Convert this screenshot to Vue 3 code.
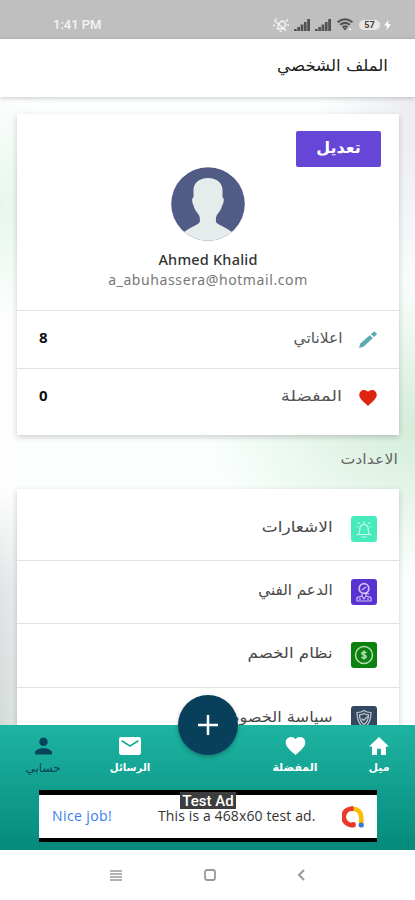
<script setup>
// stretch: horizontal scale that gives each label the wide letterforms of the design
const stats = [
  { label: 'اعلاناتي', value: 8, icon: 'pencil', stretch: 1.03 },
  { label: 'المفضلة', value: 0, icon: 'heart', stretch: 1.2 },
]
const settings = [
  { label: 'الاشعارات', icon: 'bell', stretch: 1.13 },
  { label: 'الدعم الفني', icon: 'support', stretch: 1.01 },
  { label: 'نظام الخصم', icon: 'discount', stretch: 1.11 },
  { label: 'سياسة الخصوصية', icon: 'privacy', stretch: 1.08 },
]
</script>

<template>
  <div class="screen">
    <div class="status">
      <span class="time">1:41 PM</span>
      <div class="indicators">
        <svg class="mute" viewBox="0 0 18 16" width="17" height="16"><path d="M5 12c2-1 1-6 5-8 3-1 5 2 4 5l-2 3H5zM2 3l13 11M3 8l-2 1M5 3 4 1M15 4l2-2M16 8h2M8 14l2 1" fill="none" stroke="#f4f4f4" stroke-width="1.500"/></svg>
        <svg v-for="n in 2" :key="n" class="signal" viewBox="0 0 16 12" width="16" height="12"><path d="M0 12v-2h2.700v2zM3.300 12V8h2.700v4zM6.600 12V5.500h2.700V12zM9.900 12V3h2.700v9zM13.200 12V0H16v12z" fill="#555150"/></svg>
        <svg class="wifi" viewBox="0 0 18 14" width="18" height="13"><path d="M1 4.500c5-4 11-4 16 0M3.700 7.300c3.500-2.700 7-2.700 10.600 0M6.300 10c2-1.500 3.500-1.500 5.400 0" fill="none" stroke="#555150" stroke-width="2.200"/><path d="m6.500 10.500 2.500 3 2.500-3z" fill="#555150"/><circle cx="14.500" cy="12" r="1.300" fill="#eee"/></svg>
        <span class="battery">57</span>
        <svg class="bolt" viewBox="0 0 7 10" width="7" height="10"><path d="M4.500 0 0 5.500h3L2.500 10 7 4.300H4z" fill="#fff"/></svg>
      </div>
    </div>

    <header class="header"><h1>الملف الشخصي</h1></header>

    <main class="content">
      <section class="card profile">
        <div class="intro">
          <button class="edit"><span>تعديل</span></button>
          <svg class="avatar" viewBox="0 0 74 74" width="74" height="74">
            <defs><clipPath id="disc"><circle cx="37" cy="37" r="36.800"/></clipPath></defs>
            <g clip-path="url(#disc)">
              <rect width="74" height="74" fill="#505c85"/>
              <path d="M37 11c9 0 14.500 5 14.500 12v7.500c2 0 1.500 5-.3 8-1 4-3 6.500-5 9-1.500 2-1.500 6-1 8C48 58 55 60.500 61 65l-3 10H16l-3-10c6-4.500 13-7 15.500-9.500.8-2 .5-6-1-8-2-2.500-4-5-5-9-1.500-3-2-8 0-8V23C22.500 16 28 11 37 11z" fill="#e5ecec"/>
            </g>
          </svg>
          <div class="name">Ahmed Khalid</div>
          <div class="email">a_abuhassera@hotmail.com</div>
        </div>
        <div v-for="row in stats" :key="row.icon" class="stat">
          <svg v-if="row.icon === 'pencil'" viewBox="0 0 18 17" width="18" height="17"><path d="M0 17 1.300 12.600 10.700 4.200l3.300 2.900-9.500 8.600zM11.900 3.200l2.500-2.300c.5-.5 1.100-.5 1.600 0L17.500 2.300c.5.500.5 1 0 1.500L15.200 6z" fill="#5faab1"/></svg>
          <svg v-else viewBox="2 3 20 18.350" width="18" height="16"><path d="m12 21.350-1.450-1.320C5.400 15.360 2 12.280 2 8.500 2 5.420 4.420 3 7.500 3c1.740 0 3.410.81 4.500 2.090C13.090 3.810 14.760 3 16.500 3 19.580 3 22 5.420 22 8.500c0 3.780-3.400 6.860-8.550 11.540z" fill="#e02412"/></svg>
          <span class="label"><span class="word" :style="{ '--stretch': row.stretch }">{{ row.label }}</span></span>
          <b>{{ row.value }}</b>
        </div>
      </section>

      <h2><span class="word">الاعدادت</span></h2>

      <section class="card">
        <div v-for="row in settings" :key="row.icon" class="setting">
          <span class="tile" :class="row.icon">
            <svg v-if="row.icon === 'bell'" viewBox="0 0 26 26" width="26" height="26"><path d="M7.500 18.500c1.500-2 1-4 1.500-7 .5-2 2-3 4-3s3.500 1 4 3c.5 3 0 5 1.500 7zM10.500 21h5M13 8V5.500M8.500 8 7 6.500M17.500 8 19 6.500M5.500 10.500l1.500.5M20.500 10.500l-1.500.5M5.500 19l1.500-.5M20.500 19l-1.500-.5" /></svg>
            <svg v-else-if="row.icon === 'support'" viewBox="0 0 26 26" width="26" height="26"><circle cx="13" cy="9.500" r="4.800" stroke-width="1.800"/><path d="m11 11 4-3M11 15v2l-5 1.500V22h14v-3.500L15 17v-2M11 17l2 3 2-3M9 21v-2M17 21v-2M14 14l4 1"/></svg>
            <svg v-else-if="row.icon === 'discount'" viewBox="0 0 26 26" width="26" height="26"><circle cx="13" cy="13" r="8.500" stroke-width="1.500"/><path d="M15.300 11c-1-1.400-4.600-1.400-4.600.5s4.600 1.100 4.600 3.100-3.700 2-4.800.4M13 8.500v9" stroke-width="1.500"/></svg>
            <svg v-else viewBox="0 0 26 26" width="26" height="26"><path d="M13 4.500c2 1.500 4.500 2 7 2 0 7-1.500 12-7 15-5.500-3-7-8-7-15 2.500 0 5-.5 7-2zM13 7.500c1.500 1 3 1.300 4.500 1.300 0 5-1.200 7.700-4.500 9.700-3.300-2-4.500-4.700-4.500-9.700 1.500 0 3-.3 4.500-1.300zM10.500 12.500l2 2 4-4"/></svg>
          </span>
          <span class="label"><span class="word" :style="{ '--stretch': row.stretch }">{{ row.label }}</span></span>
        </div>
      </section>
    </main>

    <footer class="dock">
      <nav class="tabs">
        <a class="tab home">
          <svg viewBox="2 3 20 17" width="20" height="18" preserveAspectRatio="none"><path d="M10 20v-6h4v6h5v-8h3L12 3 2 12h3v8z" fill="#fff"/></svg>
          <span>ميل</span>
        </a>
        <a class="tab fav">
          <svg viewBox="2 3 20 18.350" width="21" height="19"><path d="m12 21.350-1.450-1.320C5.400 15.360 2 12.280 2 8.500 2 5.420 4.420 3 7.500 3c1.740 0 3.410.81 4.500 2.090C13.090 3.810 14.760 3 16.500 3 19.580 3 22 5.420 22 8.500c0 3.780-3.400 6.860-8.550 11.540z" fill="#fff"/></svg>
          <span>المفضلة</span>
        </a>
        <a class="tab mail">
          <svg viewBox="0 0 21 17" width="22" height="18"><rect width="21" height="17" rx="2" fill="#fff"/><path d="m2.500 3.500 8 5 8-5" fill="none" stroke="#1aaa98" stroke-width="1.500"/></svg>
          <span>الرسائل</span>
        </a>
        <a class="tab account">
          <svg viewBox="4 4 16 16" width="17" height="17"><path d="M12 12a4 4 0 1 0 0-8 4 4 0 0 0 0 8zm0 2c-2.670 0-8 1.340-8 4v2h16v-2c0-2.660-5.330-4-8-4z" fill="#08435c"/></svg>
          <span>حسابي</span>
        </a>
      </nav>
      <button class="fab"><svg viewBox="0 0 20 20" width="20" height="20"><path d="M10 0v20M0 10h20" stroke="#fff" stroke-width="2.500"/></svg></button>
      <div class="ad">
        <span class="job">Nice job!</span>
        <span class="message">This is a 468x60 test ad.</span>
        <svg class="logo" viewBox="0 0 22 22" width="22" height="22">
          <path d="M11 2.700a8.200 8.200 0 0 1 8.200 8.200V18" fill="none" stroke="#fbbc04" stroke-width="4.600"/>
          <path d="M11.500 2.700H11a8.200 8.200 0 1 0 .2 16.200" fill="none" stroke="#e8392c" stroke-width="4.800"/>
          <circle cx="11.300" cy="18.700" r="2.600" fill="#e8392c"/><circle cx="19.200" cy="19" r="2.600" fill="#3475e0"/>
        </svg>
        <span class="badge">Test Ad</span>
      </div>
    </footer>

    <div class="system">
      <svg viewBox="0 0 12 11" width="12" height="11"><path d="M0 1h12M0 4h12M0 7h12M0 10h12" stroke="#999" stroke-width="1.300"/></svg>
      <svg viewBox="0 0 12 12" width="12" height="12"><rect x="1" y="1" width="10" height="10" rx="2" fill="none" stroke="#999" stroke-width="1.800"/></svg>
      <svg viewBox="0 0 8 12" width="8" height="12"><path d="M7 1 2 6l5 5" fill="none" stroke="#999" stroke-width="2"/></svg>
    </div>
  </div>
</template>

<style>
body { background: #fff; overflow: hidden; }
</style>

<style scoped>
.screen { width: 415px; height: 900px; display: flex; flex-direction: column; font-family: "DejaVu Sans", sans-serif; overflow: hidden; background: #fff; }
.status { height: 39px; flex: none; background: #bfbfbf; display: flex; justify-content: space-between; padding: 10px 24px 0 53px; box-sizing: border-box; }
.time { font: 500 13px/30px Roboto, sans-serif; color: #f5f5f5; }
.indicators { display: flex; align-items: center; height: 29px; gap: 5px; }
.battery { width: 21px; height: 10px; border-radius: 5px; background: #e9e6e6; font: 700 9px/10px Roboto, sans-serif; text-align: center; color: #453d3d; }
.bolt { margin-left: -1px; }
.header { height: 58px; flex: none; background: #fff; direction: rtl; box-shadow: 0 1px 5px rgba(0, 0, 0, .22); position: relative; padding: 0 27px; }
h1 { margin: 0; font-size: 16px; font-weight: 400; line-height: 54px; color: #222; transform: scaleX(1.04); transform-origin: right; }
.word { display: inline-block; transform: scaleX(var(--stretch, 1)); transform-origin: right; }
.content { height: 628px; flex: none; box-sizing: border-box; overflow: hidden; direction: rtl; padding: 17px 16px 0 17px; background:
  radial-gradient(ellipse 220px 150px at 425px 330px, rgba(200, 232, 208, .8), transparent),
  radial-gradient(ellipse 110px 190px at 430px 20px, rgba(228, 228, 236, .8), transparent),
  radial-gradient(ellipse 60px 110px at 0 110px, rgba(224, 244, 232, .8), transparent),
  linear-gradient(90deg, transparent, #fbfffe 60px),
  linear-gradient(#fdfefd 62%, #e2e3e6 78%, #d2dad7 100%); }
.card { background: #fff; box-shadow: 0 2px 6px rgba(0, 0, 0, .2); }
.profile { height: 321px; }
.intro { height: 196px; box-sizing: border-box; padding-top: 17px; display: flex; flex-direction: column; align-items: center; }
.edit { align-self: flex-start; margin-right: 18px; width: 85px; height: 36px; flex: none; padding: 0 0 4px; border: 0; border-radius: 2px; background: #6646d7; color: #fff; font: 700 16px "DejaVu Sans", sans-serif; }
.avatar { flex: none; }
.name { font: 500 14.500px/22px "Noto Sans", sans-serif; color: #333; margin-top: 7px; letter-spacing: .2px; direction: ltr; }
.email { font: 400 14px/20px "Noto Sans", sans-serif; color: #777; letter-spacing: .6px; direction: ltr; }
.stat { height: 58px; box-sizing: border-box; border-top: 1px solid #e2e2e2; display: flex; align-items: center; padding: 0 22px; }
.stat svg { flex: none; }
.label { font-size: 15px; color: #555; padding-bottom: 4px; }
.stat .label { margin-right: 17px; flex: 1; }
.stat b { font: 700 15px/20px "Noto Sans", sans-serif; color: #111; padding-bottom: 6px; }
h2 { margin: 14px 1px 0; height: 40px; font-size: 14px; font-weight: 400; line-height: 20px; color: #666; --stretch: 1.13; }
.setting { height: 63.300px; box-sizing: border-box; border-bottom: 1px solid #e2e2e2; display: flex; align-items: center; padding-right: 22px; }
.setting:first-child { height: 72px; padding-top: 8px; }
.setting .label { margin-right: 18px; color: #484848; }
.tile { width: 26px; height: 26px; border-radius: 3px; flex: none; }
.tile svg { display: block; fill: none; stroke: rgba(255, 255, 255, .7); stroke-width: 1.200; }
.bell { background: #45eabd; }
.support { background: #5932d3; }
.discount { background: #0a820d; }
.privacy { background: #34495f; }
.dock { position: relative; height: 125px; flex: none; box-sizing: border-box; background: linear-gradient(#1eb4a2, #058a7b); }
.tabs { height: 65px; display: flex; direction: rtl; padding: 12px 11px 0 0; box-sizing: border-box; }
.tab { width: 50px; display: flex; flex-direction: column; align-items: center; font-size: 11px; line-height: 16px; font-weight: 700; color: #fff; }
.tab svg { height: 18px; flex: none; margin-bottom: 5px; }
.fav { margin-right: 34px; }
.mail { margin-right: 115px; font-size: 10.200px; }
.account { margin-right: 37px; color: #08435c; font-size: 12px; font-weight: 400; }
.fab { position: absolute; left: 178px; top: -30px; width: 60px; height: 60px; padding: 0; border: 0; border-radius: 50%; background: #08405c; box-shadow: 0 2px 4px rgba(0, 0, 0, .25); display: grid; place-items: center; }
.ad { position: relative; width: 338px; height: 52px; box-sizing: border-box; margin-left: 39px; background: #fff; border: solid #000; border-width: 5px 0 4px; display: flex; align-items: center; padding: 0 13px; font: 14px "Open Sans", sans-serif; color: #333; }
.job { color: #377df0; width: 106px; letter-spacing: .4px; }
.message { flex: 1; letter-spacing: .12px; }
.job, .message { padding-bottom: 2px; }
.badge { position: absolute; left: 141px; top: -3px; width: 56px; height: 17px; background: #3d3d3d; color: #fff; font: 500 15px/18px Roboto, sans-serif; text-align: center; }
.system { height: 50px; flex: none; display: flex; align-items: center; justify-content: space-between; padding: 0 110px; }
</style>
